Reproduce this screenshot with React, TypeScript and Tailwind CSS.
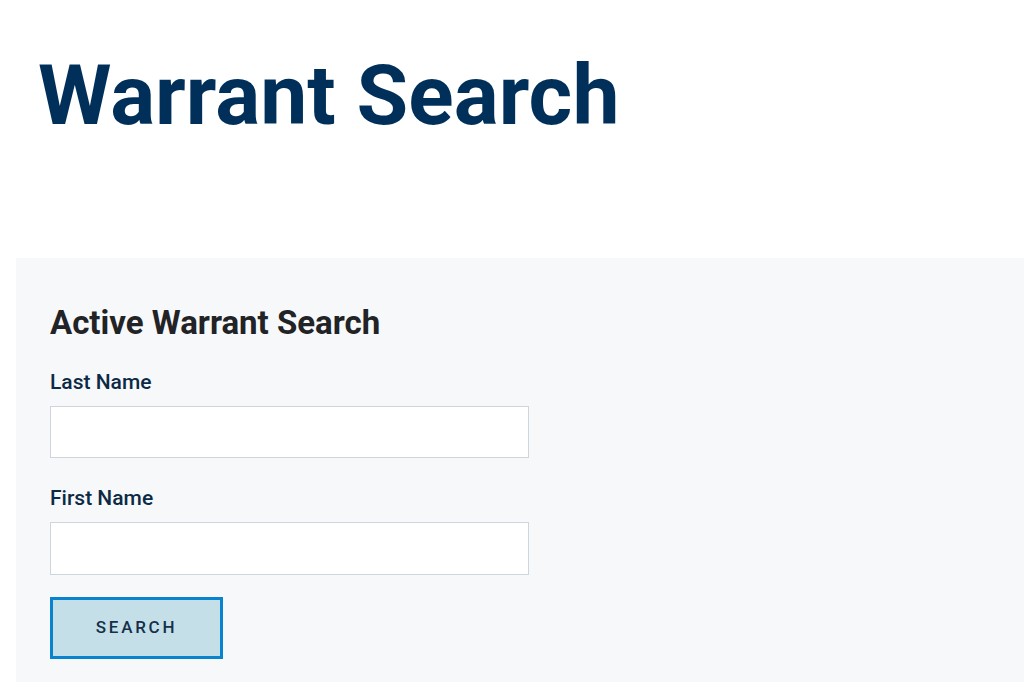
import React from "react";

export default function App() {
  return (
    <div className="min-h-screen bg-white" style={{ fontFamily: "Roboto, 'Liberation Sans', sans-serif" }}>
      <h1 className="pl-[38px] pt-[54px] text-[84px] leading-[84px] font-bold text-[#00305a]">
        Warrant Search
      </h1>
      <div className="ml-4 mt-[120px] bg-[#f7f8fa] pl-[34px] pt-[46px] pb-12">
        <h2 className="text-[33px] leading-[38px] font-bold text-[#222326]">Active Warrant Search</h2>
        <label className="block mt-[27px] text-[21px] leading-[26px] font-medium text-[#0b2a45]">Last Name</label>
        <input type="text" className="mt-[11px] block w-[479px] h-[52px] border border-[#cfd5dd] bg-white outline-none" />
        <label className="block mt-[27px] text-[21px] leading-[26px] font-medium text-[#0b2a45]">First Name</label>
        <input type="text" className="mt-[11px] block w-[479px] h-[53px] border border-[#cfd5dd] bg-white outline-none" />
        <button className="mt-[22px] block w-[173px] h-[62px] border-[3px] border-[#0a83cf] bg-[#c5dfe8] text-[17px] font-medium tracking-[0.16em] text-[#14304a]">
          SEARCH
        </button>
      </div>
    </div>
  );
}
